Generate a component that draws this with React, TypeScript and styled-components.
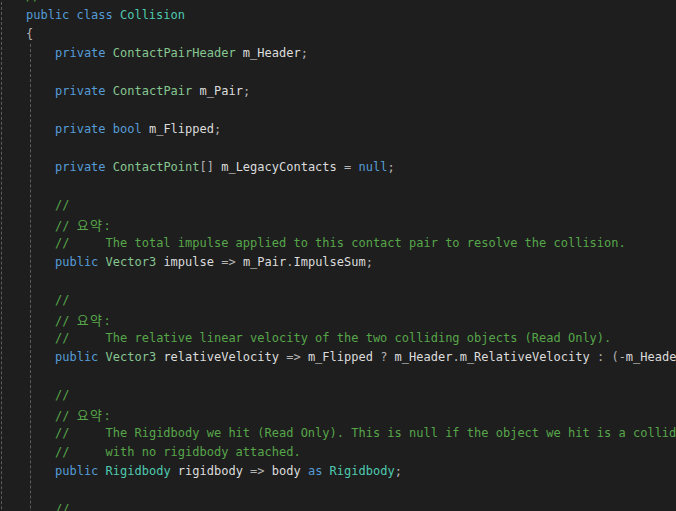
import React from "react";
import styled, { createGlobalStyle } from "styled-components";

type Kind = "kw" | "struct" | "cls" | "com" | "id" | "op" | "ko";
type Tok = [Kind, string];

const GlobalStyle = createGlobalStyle`
    html, body {
        margin: 0;
        padding: 0;
        background: #1e1e1e;
        overflow: hidden;
    }
`;

const colors: Record<Kind, string> = {
    kw: "#569cd6",
    struct: "#86c691",
    cls: "#4ec9b0",
    com: "#57a64a",
    id: "#dcdcdc",
    op: "#b4b4b4",
    ko: "#57a64a",
};

const Editor = styled.div`
    width: 676px;
    height: 511px;
    overflow: hidden;
    background: #1e1e1e;
    font-family: "DejaVu Sans Mono", "Liberation Mono", monospace;
    font-size: 12px;
`;

const Scroll = styled.div`
    margin-top: -13px;
`;

const Block = styled.div<{ $offset: number }>`
    margin-left: ${(p) => p.$offset}px;
    padding-left: 24px;
    border-left: 1px dashed #5c5c5c;
    min-height: 600px;
`;

const Line = styled.div`
    height: 19px;
    line-height: 19px;
    white-space: pre;
`;

const Token = styled.span<{ $kind: Kind }>`
    color: ${(p) => colors[p.$kind]};
`;

const Hangul = styled.span`
    font-family: "Noto Sans CJK KR", sans-serif;
    font-size: 13px;
    letter-spacing: 1.4px;
    color: #57a64a;
`;

const k = (t: string): Tok => ["kw", t];
const s = (t: string): Tok => ["struct", t];
const c = (t: string): Tok => ["cls", t];
const i = (t: string): Tok => ["id", t];
const o = (t: string): Tok => ["op", t];
const cm = (t: string): Tok => ["com", t];

const summary = (text: string[]): Tok[][] => [
    [cm("//")],
    [cm("// "), ["ko", "요약"], cm(":")],
    ...text.map((t) => [cm("//     " + t)]),
];

const header: Tok[][] = [
    [cm("//     Describes a collision.")],
    [k("public"), i(" "), k("class"), i(" "), c("Collision")],
    [o("{")],
];

const body: Tok[][] = [
    [k("private"), i(" "), s("ContactPairHeader"), i(" m_Header"), o(";")],
    [],
    [k("private"), i(" "), s("ContactPair"), i(" m_Pair"), o(";")],
    [],
    [k("private"), i(" "), k("bool"), i(" m_Flipped"), o(";")],
    [],
    [k("private"), i(" "), s("ContactPoint"), o("[]"), i(" m_LegacyContacts "), o("="), i(" "), k("null"), o(";")],
    [],
    ...summary(["The total impulse applied to this contact pair to resolve the collision."]),
    [k("public"), i(" "), s("Vector3"), i(" impulse "), o("=>"), i(" m_Pair"), o("."), i("ImpulseSum"), o(";")],
    [],
    ...summary(["The relative linear velocity of the two colliding objects (Read Only)."]),
    [
        k("public"), i(" "), s("Vector3"), i(" relativeVelocity "), o("=>"), i(" m_Flipped "), o("?"),
        i(" m_Header"), o("."), i("m_RelativeVelocity "), o(":"), i(" "), o("(-"), i("m_Header"), o("."),
        i("m_RelativeVelocity"), o(");"),
    ],
    [],
    ...summary([
        "The Rigidbody we hit (Read Only). This is null if the object we hit is a collider",
        "with no rigidbody attached.",
    ]),
    [k("public"), i(" "), c("Rigidbody"), i(" rigidbody "), o("=>"), i(" body "), k("as"), i(" "), c("Rigidbody"), o(";")],
    [],
    [cm("//")],
];

const CodeLine = ({ tokens }: { tokens: Tok[] }) => (
    <Line>
        {tokens.length === 0
            ? " "
            : tokens.map(([kind, text], n) =>
                  kind === "ko" ? (
                      <Hangul key={n}>{text}</Hangul>
                  ) : (
                      <Token key={n} $kind={kind}>
                          {text}
                      </Token>
                  )
              )}
    </Line>
);

export default function App() {
    return (
        <Editor>
            <GlobalStyle />
            <Scroll>
                <Block $offset={1}>
                    {header.map((l, n) => (
                        <CodeLine key={n} tokens={l} />
                    ))}
                    <Block $offset={4}>
                        {body.map((l, n) => (
                            <CodeLine key={n} tokens={l} />
                        ))}
                    </Block>
                </Block>
            </Scroll>
        </Editor>
    );
}
